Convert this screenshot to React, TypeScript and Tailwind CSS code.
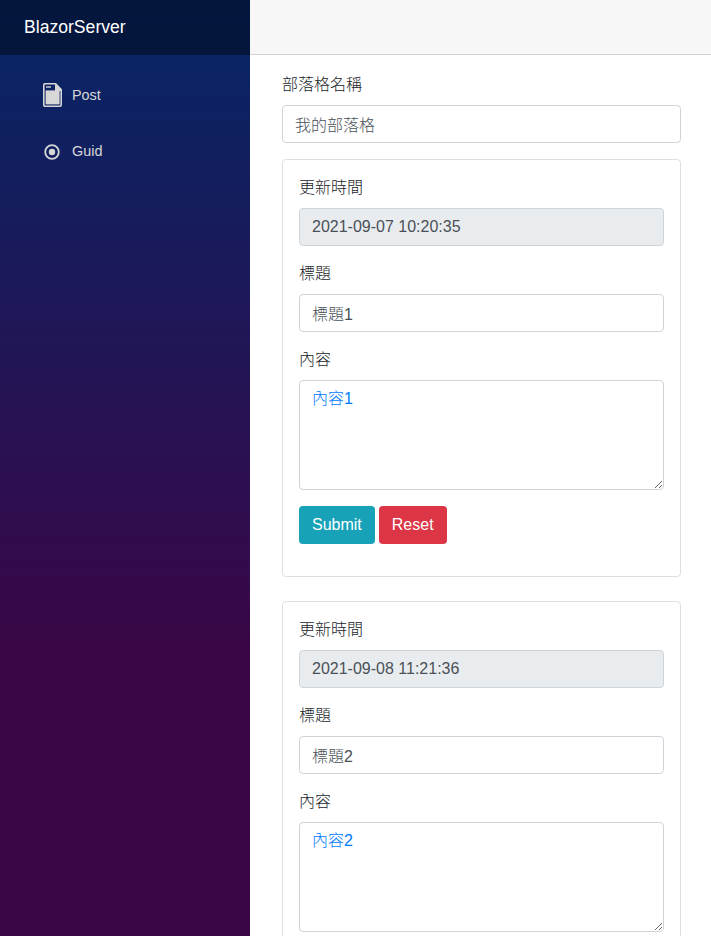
const cjk = "font-['Liberation_Sans','Noto_Sans_CJK_TC',sans-serif]";

const posts = [
    { time: "2021-09-07 10:20:35", title: "標題1", content: "內容1" },
    { time: "2021-09-08 11:21:36", title: "標題2", content: "內容2" },
];

const inputClass =
    "block w-full h-[38px] px-3 py-1.5 text-base leading-6 border border-[#ced4da] rounded outline-none";

function FileIcon() {
    return (
        <svg width="19" height="24" viewBox="0 0 19 24" fill="none">
            <path
                d="M2 .8h10.6l5.6 5.8V22a1.2 1.2 0 0 1-1.2 1.2H2A1.2 1.2 0 0 1 .8 22V2A1.2 1.2 0 0 1 2 .8z"
                stroke="#d7d7d7"
                strokeWidth="1.6"
            />
            <path d="M2.6 7.4h14V21.4H2.6z" fill="#d7d7d7" />
            <path d="M12 1.5h1l5 5v1.4h-6z" fill="#d7d7d7" />
            <path d="M3 4h5" stroke="#d7d7d7" strokeWidth="1.4" />
        </svg>
    );
}

function RadioIcon() {
    return (
        <svg width="16" height="16" viewBox="0 0 16 16" fill="none">
            <circle cx="8" cy="8" r="6.8" stroke="#d7d7d7" strokeWidth="1.8" />
            <circle cx="8" cy="8" r="3.2" fill="#d7d7d7" />
        </svg>
    );
}

function PostCard({ post }: { post: (typeof posts)[number] }) {
    return (
        <form className="mb-6 rounded border border-[#dfdfdf] p-4 pb-8">
            <div className="mb-4">
                <label className="mb-2 block h-6 font-light leading-6 text-[#212529]">更新時間</label>
                <input
                    readOnly
                    value={post.time}
                    className={`${inputClass} bg-[#e9ecef] text-[#495057]`}
                />
            </div>
            <div className="mb-4">
                <label className="mb-2 block h-6 font-light leading-6 text-[#212529]">標題</label>
                <input readOnly value={post.title} className={`${inputClass} bg-white font-light text-[#495057]`} />
            </div>
            <div className="mb-4">
                <label className="mb-2 block h-6 font-light leading-6 text-[#212529]">內容</label>
                <textarea
                    readOnly
                    value={post.content}
                    className={`${inputClass} h-[110px] bg-white font-light text-[#007bff]`}
                />
            </div>
            <div className="flex gap-1">
                <button
                    type="button"
                    className="h-[38px] rounded bg-[#17a2b8] px-[13px] text-base text-white"
                >
                    Submit
                </button>
                <button
                    type="button"
                    className="h-[38px] rounded bg-[#dc3545] px-[13px] text-base text-white"
                >
                    Reset
                </button>
            </div>
        </form>
    );
}

export default function App() {
    return (
        <div className={`flex h-[936px] overflow-hidden bg-white ${cjk}`}>
            <aside className="w-[250px] shrink-0 bg-[linear-gradient(180deg,#052767_0%,#3a0647_70%)]">
                <div className="flex h-[55px] items-center bg-black/40 pl-6 text-[17.6px] text-white">
                    BlazorServer
                </div>
                <nav className="pt-[13px]">
                    <a className="flex h-[56px] items-center pl-[43px] text-[14.4px] text-[#d7d7d7]">
                        <span className="mb-[2px] flex w-[29px] items-center">
                            <FileIcon />
                        </span>
                        Post
                    </a>
                    <a className="flex h-[56px] items-center pl-[44px] text-[14.4px] text-[#d7d7d7]">
                        <span className="flex w-[28px] items-center">
                            <RadioIcon />
                        </span>
                        Guid
                    </a>
                </nav>
            </aside>
            <div className="min-w-0 flex-1">
                <div className="h-[55px] border-b border-[#d6d5d5] bg-[#f7f7f7]" />
                <main className="pl-8 pr-[30px] pt-[18px]">
                    <div className="mb-4">
                        <label className="mb-2 block h-6 font-light leading-6 text-[#212529]">部落格名稱</label>
                        <input readOnly value="我的部落格" className={`${inputClass} bg-white font-light text-[#495057]`} />
                    </div>
                    {posts.map((post) => (
                        <PostCard key={post.time} post={post} />
                    ))}
                </main>
            </div>
        </div>
    );
}
